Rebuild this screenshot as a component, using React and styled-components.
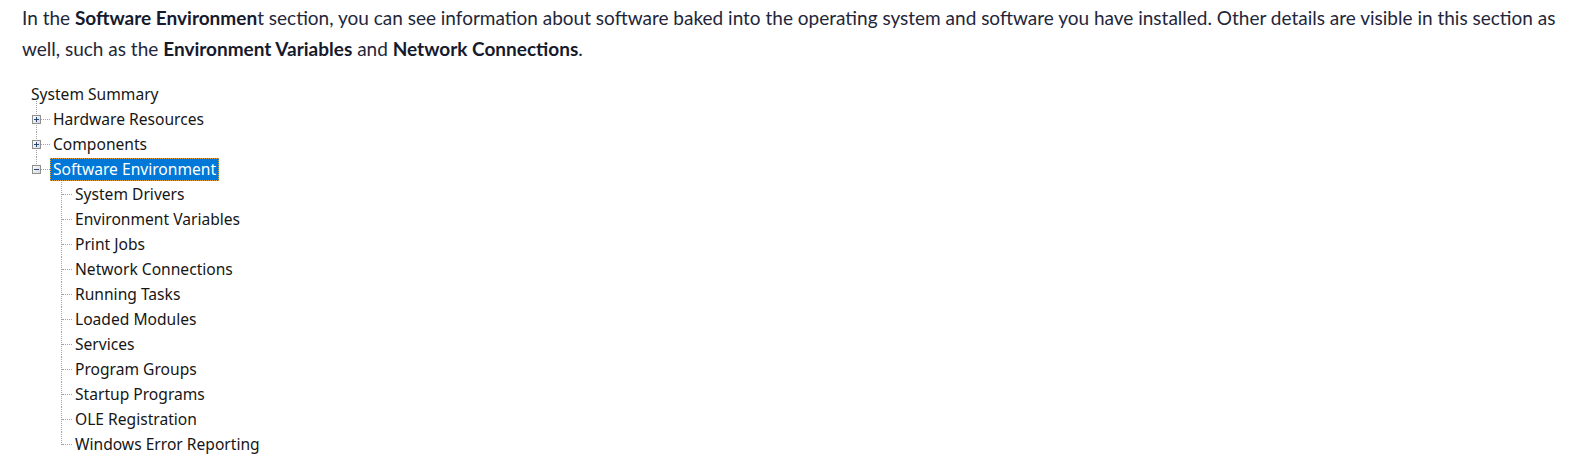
import React from 'react';
import styled, { createGlobalStyle } from 'styled-components';

const GlobalStyle = createGlobalStyle`
  body {
    margin: 0;
    background: #fff;
  }
`;

const Page = styled.div`
  padding: 2px 0 0 22px;
`;

const Intro = styled.p`
  margin: 0;
  width: 1555px;
  font-family: Lato, "Open Sans", sans-serif;
  font-size: 19px;
  line-height: 31px;
  color: #23263a;

  strong {
    font-weight: 700;
    color: #151a2d;
  }
`;

const Tree = styled.ul`
  list-style: none;
  margin: 18px 0 0 -22px;
  padding: 0;
  font-family: "Noto Sans", "Open Sans", sans-serif;
  font-size: 15.6px;
  color: #161616;
`;

const Row = styled.li`
  position: relative;
  display: flex;
  align-items: center;
  height: 25px;
  padding-left: ${p => p.$indent}px;

  &::before {
    content: '';
    display: ${p => (p.$vline ? 'block' : 'none')};
    position: absolute;
    left: ${p => p.$vx}px;
    top: ${p => p.$vtop || 0}px;
    height: ${p => (p.$vline === 'half' ? `calc(50% - ${p.$vtop || 0}px)` : `calc(100% - ${p.$vtop || 0}px)`)};
    border-left: 1px dotted #a3a3a3;
  }
`;

const Connector = styled.span`
  flex: none;
  width: ${p => p.$w}px;
  border-top: 1px dotted #a3a3a3;
`;

const Label = styled.span`
  flex: none;
  line-height: 21px;
  padding: 0 2px;
  border: 1px dotted ${p => (p.$selected ? '#e8a040' : 'transparent')};
  background: ${p => (p.$selected ? '#0078d7' : 'transparent')};
  color: ${p => (p.$selected ? '#fff' : 'inherit')};
  white-space: nowrap;
`;

const ExpanderBox = styled.svg`
  flex: none;
  display: block;
  position: relative;
  z-index: 1;
`;

const Expander = ({ open }) => (
  <ExpanderBox width="9" height="9" viewBox="0 0 9 9">
    <defs>
      <linearGradient id="exp" x1="0" y1="0" x2="1" y2="1">
        <stop offset="0" stopColor="#ffffff" />
        <stop offset="1" stopColor="#d6d6d6" />
      </linearGradient>
    </defs>
    <rect x="0.5" y="0.5" width="8" height="8" fill="url(#exp)" stroke="#8e8f8f" />
    <line x1="2" y1="4.5" x2="7" y2="4.5" stroke="#25467f" />
    {!open && <line x1="4.5" y1="2" x2="4.5" y2="7" stroke="#25467f" />}
  </ExpanderBox>
);

const sections = [
  { label: 'Hardware Resources' },
  { label: 'Components' },
  { label: 'Software Environment', open: true, selected: true },
];

const children = [
  'System Drivers',
  'Environment Variables',
  'Print Jobs',
  'Network Connections',
  'Running Tasks',
  'Loaded Modules',
  'Services',
  'Program Groups',
  'Startup Programs',
  'OLE Registration',
  'Windows Error Reporting',
];

export default function App() {
  return (
    <>
      <GlobalStyle />
      <Page>
        <Intro>
          In the <strong>Software Environmen</strong>t section, you can see information about software baked into the
          operating system and software you have installed. Other details are visible in this section as well, such as
          the <strong>Environment Variables</strong> and <strong>Network Connections</strong>.
        </Intro>
        <Tree>
          <Row $indent={28}>
            <Label>System Summary</Label>
          </Row>
          {sections.map((s, i) => (
            <Row
              key={s.label}
              $indent={32}
              $vx={36}
              $vtop={i === 0 ? -6 : 0}
              $vline={i === sections.length - 1 ? 'half' : 'full'}
            >
              <Expander open={s.open} />
              <Connector $w={9} />
              <Label $selected={s.selected}>{s.label}</Label>
            </Row>
          ))}
          {children.map((c, i) => (
            <Row key={c} $indent={62} $vx={61} $vline={i === children.length - 1 ? 'half' : 'full'}>
              <Connector $w={10} />
              <Label>{c}</Label>
            </Row>
          ))}
        </Tree>
      </Page>
    </>
  );
}
